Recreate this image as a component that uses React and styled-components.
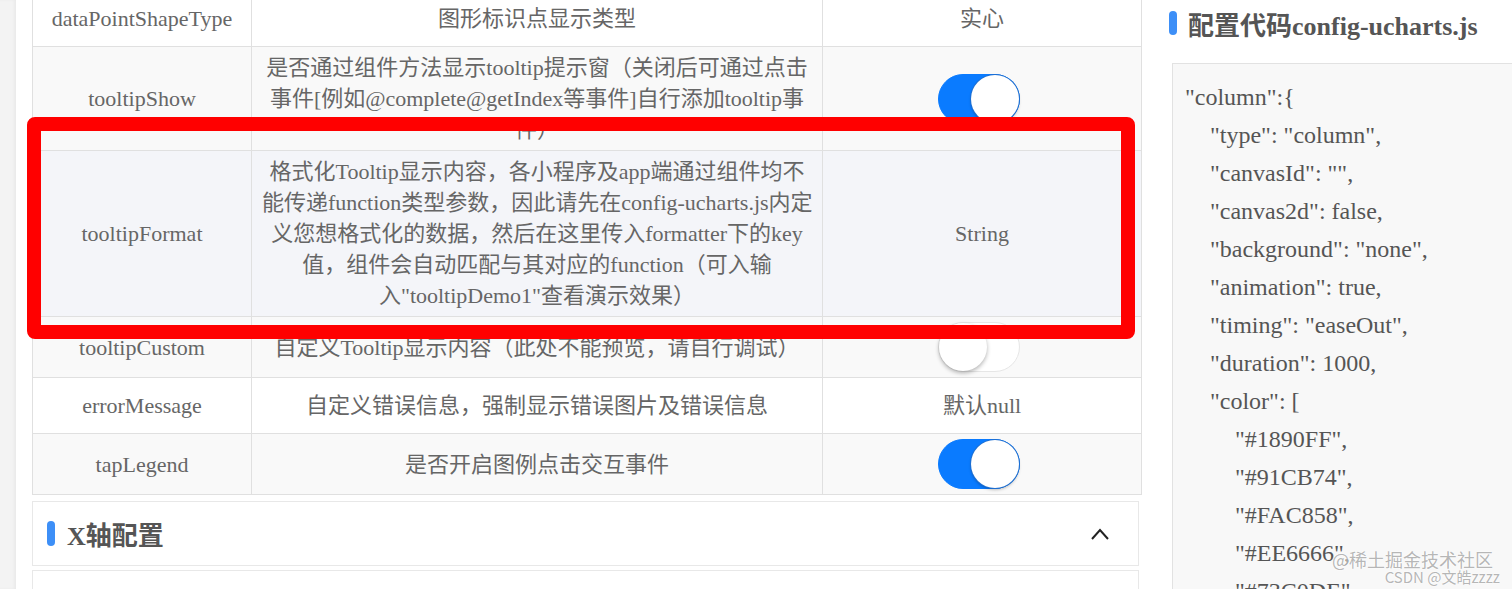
import styled, { createGlobalStyle } from "styled-components"

const GlobalStyle = createGlobalStyle`
    html, body {
        margin: 0;
        padding: 0;
        background: #ffffff;
        overflow: hidden;
    }
    body {
        font-family: "Liberation Serif", "Noto Sans CJK SC", serif;
        color: #666666;
    }
`

const rows = [
    { name: "dataPointShapeType", desc: ["图形标识点显示类型"], value: "实心" },
    {
        name: "tooltipShow",
        desc: [
            "是否通过组件方法显示tooltip提示窗（关闭后可通过点击",
            "事件[例如@complete@getIndex等事件]自行添加tooltip事",
            "件）",
        ],
        toggle: true,
    },
    {
        name: "tooltipFormat",
        desc: [
            "格式化Tooltip显示内容，各小程序及app端通过组件均不",
            "能传递function类型参数，因此请先在config-ucharts.js内定",
            "义您想格式化的数据，然后在这里传入formatter下的key",
            "值，组件会自动匹配与其对应的function（可入输",
            "入\"tooltipDemo1\"查看演示效果）",
        ],
        value: "String",
        hover: true,
    },
    { name: "tooltipCustom", desc: ["自定义Tooltip显示内容（此处不能预览，请自行调试）"], toggle: false },
    { name: "errorMessage", desc: ["自定义错误信息，强制显示错误图片及错误信息"], value: "默认null" },
    { name: "tapLegend", desc: ["是否开启图例点击交互事件"], toggle: true },
]

const code = [
    [0, "\"column\":{"],
    [1, "\"type\": \"column\","],
    [1, "\"canvasId\": \"\","],
    [1, "\"canvas2d\": false,"],
    [1, "\"background\": \"none\","],
    [1, "\"animation\": true,"],
    [1, "\"timing\": \"easeOut\","],
    [1, "\"duration\": 1000,"],
    [1, "\"color\": ["],
    [2, "\"#1890FF\","],
    [2, "\"#91CB74\","],
    [2, "\"#FAC858\","],
    [2, "\"#EE6666\","],
    [2, "\"#73C0DE\","],
]

const Switch = ({ on }) => (
    <Track $on={on}>
        <Knob $on={on} />
    </Track>
)

const App = () => {
    return (
        <>
            <GlobalStyle />
            <Page>
                <Strip />
                <Main>
                    <Table>
                        <colgroup>
                            <col style={{ width: 219 }} />
                            <col style={{ width: 571 }} />
                            <col style={{ width: 319 }} />
                        </colgroup>
                        <tbody>
                            {rows.map((r, i) => (
                                <Row key={r.name} $striped={i % 2 === 1} $hover={r.hover}>
                                    <Cell>{r.name}</Cell>
                                    <Cell>
                                        {r.desc.map(line => (
                                            <Line key={line}>{line}</Line>
                                        ))}
                                    </Cell>
                                    <Cell>{r.toggle !== undefined ? <Switch on={r.toggle} /> : r.value}</Cell>
                                </Row>
                            ))}
                        </tbody>
                    </Table>
                    <Card>
                        <Bar />
                        <CardTitle>X轴配置</CardTitle>
                        <Chevron viewBox="0 0 20 14">
                            <path d="M2 12 L10 3 L18 12" />
                        </Chevron>
                    </Card>
                    <Card $next />
                    <Highlight />
                </Main>
                <Side>
                    <SideTitle>
                        <Bar $small />
                        <span>配置代码config-ucharts.js</span>
                    </SideTitle>
                    <CodeBox>
                        {code.map(([indent, text], i) => (
                            <CodeLine key={i} $indent={indent}>
                                {text}
                            </CodeLine>
                        ))}
                    </CodeBox>
                </Side>
                <Watermark>
                    <span>@稀土掘金技术社区</span>
                    <small>CSDN @文皓zzzz</small>
                </Watermark>
            </Page>
        </>
    )
}

export default App

const Page = styled.div`
    position: relative;
    display: flex;
    width: 1512px;
    height: 589px;
    overflow: hidden;
`

const Strip = styled.div`
    width: 16px;
    flex-shrink: 0;
    background: #f3f3f3;
    box-shadow: inset -2px 0 3px rgba(0, 0, 0, 0.04);
`

const Main = styled.div`
    position: relative;
    width: 1140px;
    flex-shrink: 0;
    box-sizing: border-box;
    padding: 0 15px 0 16px;
    margin-top: -10px;
`

const Table = styled.table`
    width: 1109px;
    table-layout: fixed;
    border-collapse: collapse;
    border: 1px solid #e0e0e0;
    font-size: 22px;
`

const Row = styled.tr`
    background: ${p => (p.$hover ? "#f4f5f9" : p.$striped ? "#f9f9f9" : "#ffffff")};
`

const Cell = styled.td`
    height: 56px;
    box-sizing: border-box;
    padding: 5px 10px;
    border: 1px solid #e0e0e0;
    text-align: center;
    vertical-align: middle;
    line-height: 31px;
    color: #666666;
`

const Line = styled.span`
    display: block;
    white-space: nowrap;
`

const Track = styled.div`
    position: relative;
    display: inline-block;
    vertical-align: middle;
    width: 82px;
    height: 50px;
    margin-right: 7px;
    border-radius: 25px;
    box-sizing: border-box;
    background: ${p => (p.$on ? "#0a7bff" : "#ffffff")};
    border: 1px solid ${p => (p.$on ? "#0a7bff" : "#e6e6e6")};
`

const Knob = styled.div`
    position: absolute;
    top: 0;
    left: ${p => (p.$on ? "32px" : "0")};
    width: 48px;
    height: 48px;
    border-radius: 50%;
    background: #ffffff;
    box-shadow: ${p => (p.$on ? "0 0 0 1px #1f6fd0, 0 2px 3px rgba(0,0,0,0.25)" : "0 2px 4px rgba(0,0,0,0.3)")};
`

const Card = styled.div`
    display: flex;
    align-items: center;
    box-sizing: border-box;
    width: 1107px;
    height: ${p => (p.$next ? "40px" : "65px")};
    margin-top: ${p => (p.$next ? "4px" : "6px")};
    padding: 0 28px 0 14px;
    background: #ffffff;
    border: 1px solid #e8e8e8;
`

const Bar = styled.div`
    width: 8px;
    height: ${p => (p.$small ? "24px" : "25px")};
    border-radius: 4px;
    background: #3d8ff7;
    flex-shrink: 0;
`

const CardTitle = styled.div`
    flex: 1;
    margin-left: 12px;
    font-size: 26px;
    font-weight: bold;
    color: #555555;
`

const Chevron = styled.svg`
    width: 20px;
    height: 14px;
    fill: none;
    stroke: #222222;
    stroke-width: 2;
`

const Highlight = styled.div`
    position: absolute;
    left: 11px;
    top: 127px;
    width: 1108px;
    height: 222px;
    box-sizing: border-box;
    border: 14px solid #ff0000;
    border-radius: 8px;
`

const Side = styled.div`
    flex: 1;
    padding-left: 13px;
`

const SideTitle = styled.div`
    display: flex;
    align-items: center;
    gap: 11px;
    height: 30px;
    margin-top: 8px;
    font-size: 26px;
    font-weight: bold;
    color: #555555;
`

const CodeBox = styled.div`
    width: 400px;
    margin: 25px 0 0 3px;
    padding: 14px 0 0 12px;
    height: 600px;
    background: #f8f8f8;
    border: 1px solid #e2e2e2;
    font-size: 24px;
    line-height: 38px;
    color: #555555;
`

const CodeLine = styled.div`
    white-space: pre;
    padding-left: ${p => p.$indent * 25}px;
`

const Watermark = styled.div`
    position: absolute;
    right: 12px;
    bottom: 3px;
    display: flex;
    flex-direction: column;
    align-items: flex-end;
    font-family: "Noto Sans CJK SC", sans-serif;
    color: rgba(120, 120, 120, 0.55);
    text-shadow: 0 0 2px #fff, 0 0 2px #fff;
    line-height: 18px;

    span {
        font-size: 18px;
        margin-right: 7px;
    }
    small {
        font-size: 15px;
    }
`
